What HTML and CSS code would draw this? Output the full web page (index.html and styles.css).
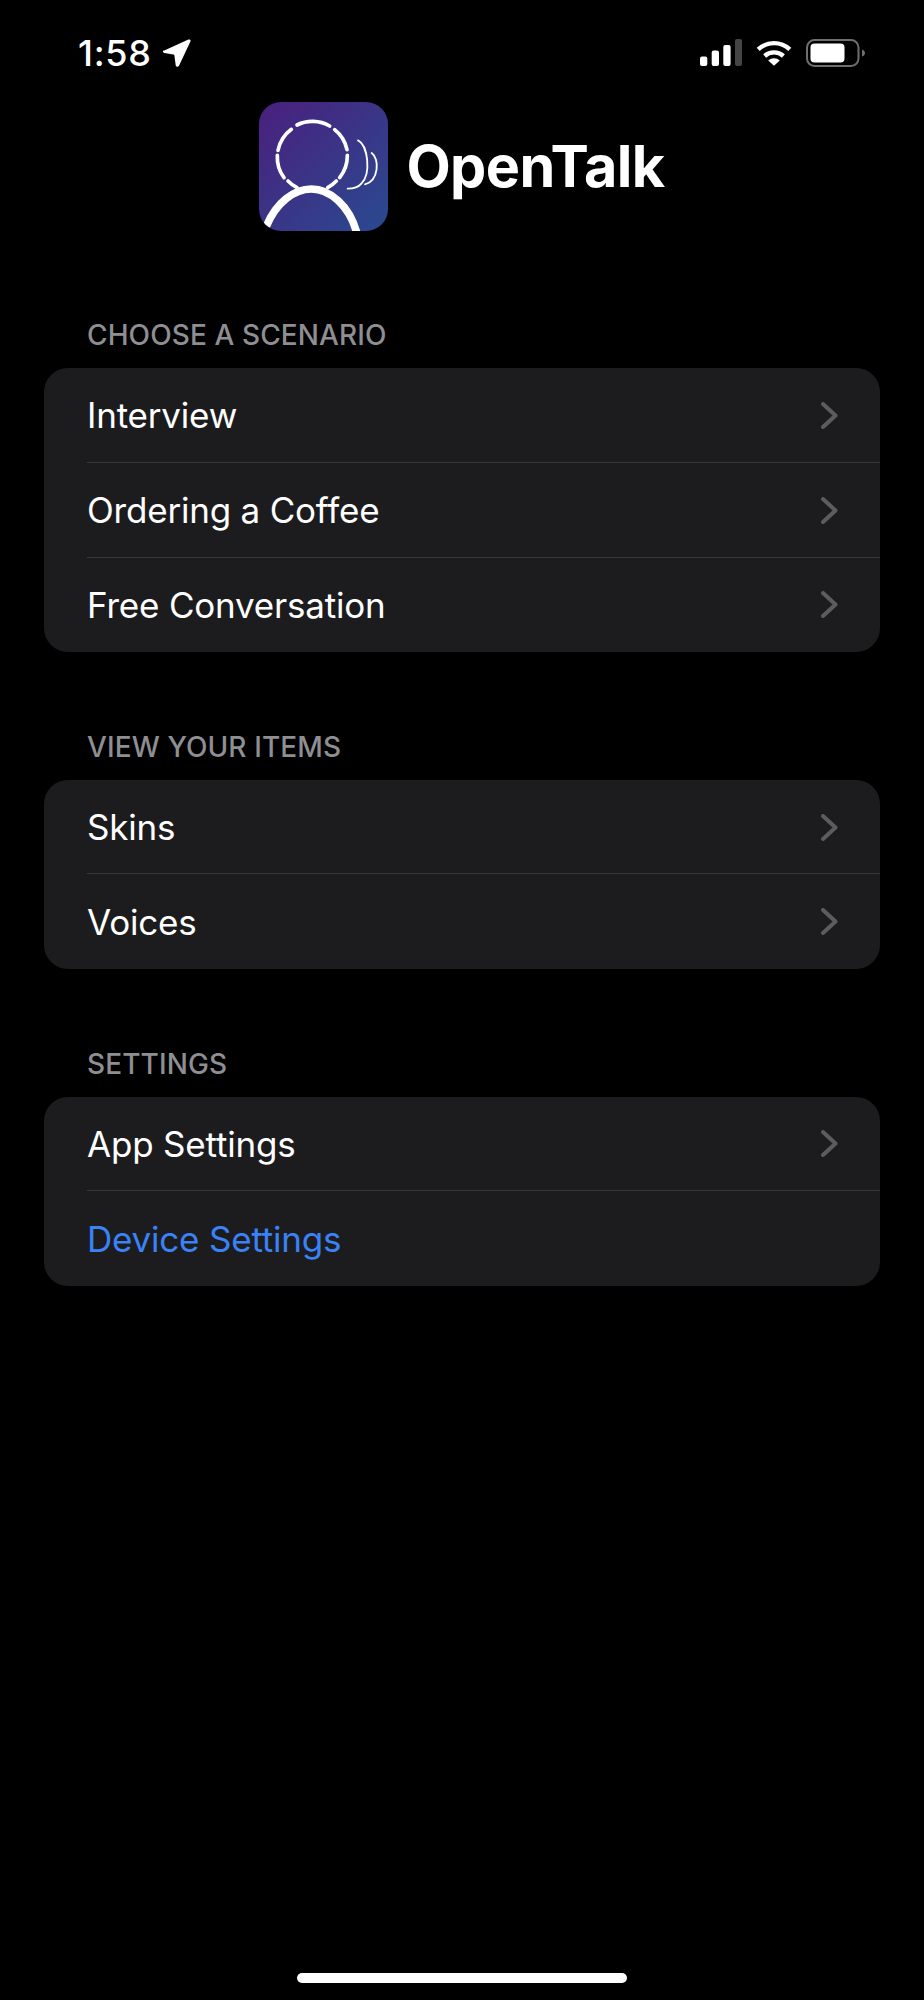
FILE: index.html
```html
<!DOCTYPE html>
<html lang="en">
<head>
<meta charset="utf-8">
<title>OpenTalk</title>
<link rel="stylesheet" href="styles.css">
</head>
<body>
<div class="screen">
  <header class="status-bar">
    <div class="status-left">
      <span class="time">1:58</span>
      <svg class="arrow" viewBox="0 0 28 28"><path d="M1.300 11.600 25.400.6c1.500-.7 2.700.6 2 2L16 26.700c-.8 1.600-3 1.400-3.300-.4l-1.300-9.800c-.1-.6-.4-.9-1-1l-9.100-1.500c-1.700-.3-2-2.500-.3-2.400Z"/></svg>
    </div>
    <div class="status-right">
      <svg class="signal" viewBox="0 0 42 27">
        <rect x="0" y="17.500" width="7.300" height="9.500" rx="2"/>
        <rect x="11.700" y="11.500" width="7.300" height="15.500" rx="2"/>
        <rect x="23.300" y="6" width="7.300" height="21" rx="2"/>
        <rect class="dim" x="35" y="0" width="7" height="27" rx="2"/>
      </svg>
      <svg class="wifi" viewBox="0 0 36 27">
        <path class="wave" d="M2.200 10.400a23 23 0 0 1 31.600 0"/>
        <path class="wave" d="M8.600 17a14 14 0 0 1 18.800 0"/>
        <path d="M18 26.800 12.200 21.400a8.600 8.600 0 0 1 11.600 0Z"/>
      </svg>
      <svg class="battery" viewBox="0 0 59 28">
        <rect class="shell" x="1" y="1" width="51.500" height="26" rx="7.500"/>
        <rect x="4.500" y="4.500" width="34" height="19" rx="4"/>
        <path class="nub" d="M56 10.500c1.800.5 3 2 3 3.500s-1.200 3-3 3.500Z"/>
      </svg>
    </div>
  </header>

  <div class="brand">
    <svg class="logo" viewBox="58 35 387 387">
      <defs>
        <linearGradient id="logoFill" x1="0" y1="0" x2="1" y2="1">
          <stop offset="0" stop-color="#4a1f7e"/>
          <stop offset="1" stop-color="#2a4a90"/>
        </linearGradient>
        <clipPath id="logoClip"><rect x="58" y="35" width="387" height="387" rx="66"/></clipPath>
      </defs>
      <rect x="58" y="35" width="387" height="387" rx="66" fill="url(#logoFill)"/>
      <g clip-path="url(#logoClip)" fill="none" stroke="#fff" stroke-linecap="round">
        <g stroke-width="11">
          <path d="M172 104A105 105 0 0 1 270 107"/>
          <path d="M285 118A105 105 0 0 1 322 178"/>
          <path d="M323 195A105 105 0 0 1 300 262"/>
          <path d="M290 272A105 105 0 0 1 264 292"/>
          <path d="M172 292A105 105 0 0 1 145 272"/>
          <path d="M133 262A105 105 0 0 1 113 195"/>
          <path d="M115 180A105 105 0 0 1 155 117"/>
        </g>
        <path stroke-width="23" stroke-linecap="butt" d="M80 408C110 335 165 296 215 296C270 296 330 345 352 430"/>
        <g stroke-width="5.500">
          <path d="M355 150C385 165 395 250 365 280C355 292 340 295 324 295"/>
          <path d="M396 188C420 205 418 270 376 282"/>
        </g>
      </g>
    </svg>
    <h1 class="title">OpenTalk</h1>
  </div>

  <main class="lists">
    <section class="group">
      <h2 class="group-label">CHOOSE A SCENARIO</h2>
      <ul class="card">
        <li class="row"><span>Interview</span><svg class="chevron" viewBox="0 0 17 27"><path d="M2 2l12.500 11.500L2 25"/></svg></li>
        <li class="row"><span>Ordering a Coffee</span><svg class="chevron" viewBox="0 0 17 27"><path d="M2 2l12.500 11.500L2 25"/></svg></li>
        <li class="row"><span>Free Conversation</span><svg class="chevron" viewBox="0 0 17 27"><path d="M2 2l12.500 11.500L2 25"/></svg></li>
      </ul>
    </section>
    <section class="group">
      <h2 class="group-label">VIEW YOUR ITEMS</h2>
      <ul class="card">
        <li class="row"><span>Skins</span><svg class="chevron" viewBox="0 0 17 27"><path d="M2 2l12.500 11.500L2 25"/></svg></li>
        <li class="row"><span>Voices</span><svg class="chevron" viewBox="0 0 17 27"><path d="M2 2l12.500 11.500L2 25"/></svg></li>
      </ul>
    </section>
    <section class="group">
      <h2 class="group-label">SETTINGS</h2>
      <ul class="card">
        <li class="row"><span>App Settings</span><svg class="chevron" viewBox="0 0 17 27"><path d="M2 2l12.500 11.500L2 25"/></svg></li>
        <li class="row link"><span>Device Settings</span></li>
      </ul>
    </section>
  </main>

  <div class="home-indicator"></div>
</div>
</body>
</html>
```

FILE: styles.css
```css
* { box-sizing: border-box; }
html, body { margin: 0; padding: 0; background: #000; }
body { font-family: Inter, "Liberation Sans", sans-serif; color: #fff; }

.screen {
  width: 924px;
  height: 2000px;
  display: flex;
  flex-direction: column;
  overflow: hidden;
}

.status-bar {
  height: 101px;
  padding: 36px 59px 0 78px;
  display: flex;
  justify-content: space-between;
  align-items: flex-start;
}
.status-left { display: flex; align-items: center; gap: 11px; height: 34px; }
.time { font-size: 36px; font-weight: 500; line-height: 34px; letter-spacing: 0.7px; }
.arrow { width: 28px; height: 28px; fill: #fff; }
.status-right { display: flex; align-items: center; gap: 14px; margin-top: 3px; height: 27px; }
.signal { width: 42px; height: 27px; fill: #fff; }
.signal .dim { fill: #454545; }
.wifi { width: 36px; height: 27px; fill: #fff; }
.wifi .wave { fill: none; stroke: #fff; stroke-width: 4.400; }
.battery { width: 59px; height: 28px; fill: #fff; }
.battery .shell { fill: none; stroke: #6e6e6e; stroke-width: 2; }
.battery .nub { fill: #6e6e6e; }

.brand {
  display: flex;
  align-items: center;
  justify-content: center;
  gap: 18px;
  height: 131px;
}
.logo { width: 129px; height: 129px; flex: none; }
.title { margin: 0; font-size: 57.500px; font-weight: 700; letter-spacing: -0.6px; line-height: 1; }

.lists { display: flex; flex-direction: column; gap: 79.300px; padding: 88px 44px 0; }
.group-label {
  margin: 0 0 18px;
  padding-left: 43px;
  font-size: 28px;
  font-weight: 500;
  line-height: 30px;
  letter-spacing: 0.1px;
  color: #8e8e93;
}
.card {
  list-style: none;
  margin: 0;
  padding: 0;
  background: #1c1c1e;
  border-radius: 24px;
  overflow: hidden;
}
.row {
  position: relative;
  height: 94.800px;
  display: flex;
  align-items: center;
  justify-content: space-between;
  padding: 0 42px 0 43px;
  font-size: 35px;
  letter-spacing: -0.2px;
  color: #fff;
}
.row + .row::before {
  content: "";
  position: absolute;
  top: -1px;
  left: 43px;
  right: 0;
  height: 1px;
  background: #38383a;
}
.link { color: #3a82f6; }
.chevron {
  width: 17px;
  height: 27px;
  fill: none;
  stroke: #5c5c5f;
  stroke-width: 4;
  stroke-linecap: round;
  stroke-linejoin: round;
}
.home-indicator {
  width: 330px;
  height: 10px;
  margin: auto auto 17px;
  background: #fff;
  border-radius: 5px;
}
```
